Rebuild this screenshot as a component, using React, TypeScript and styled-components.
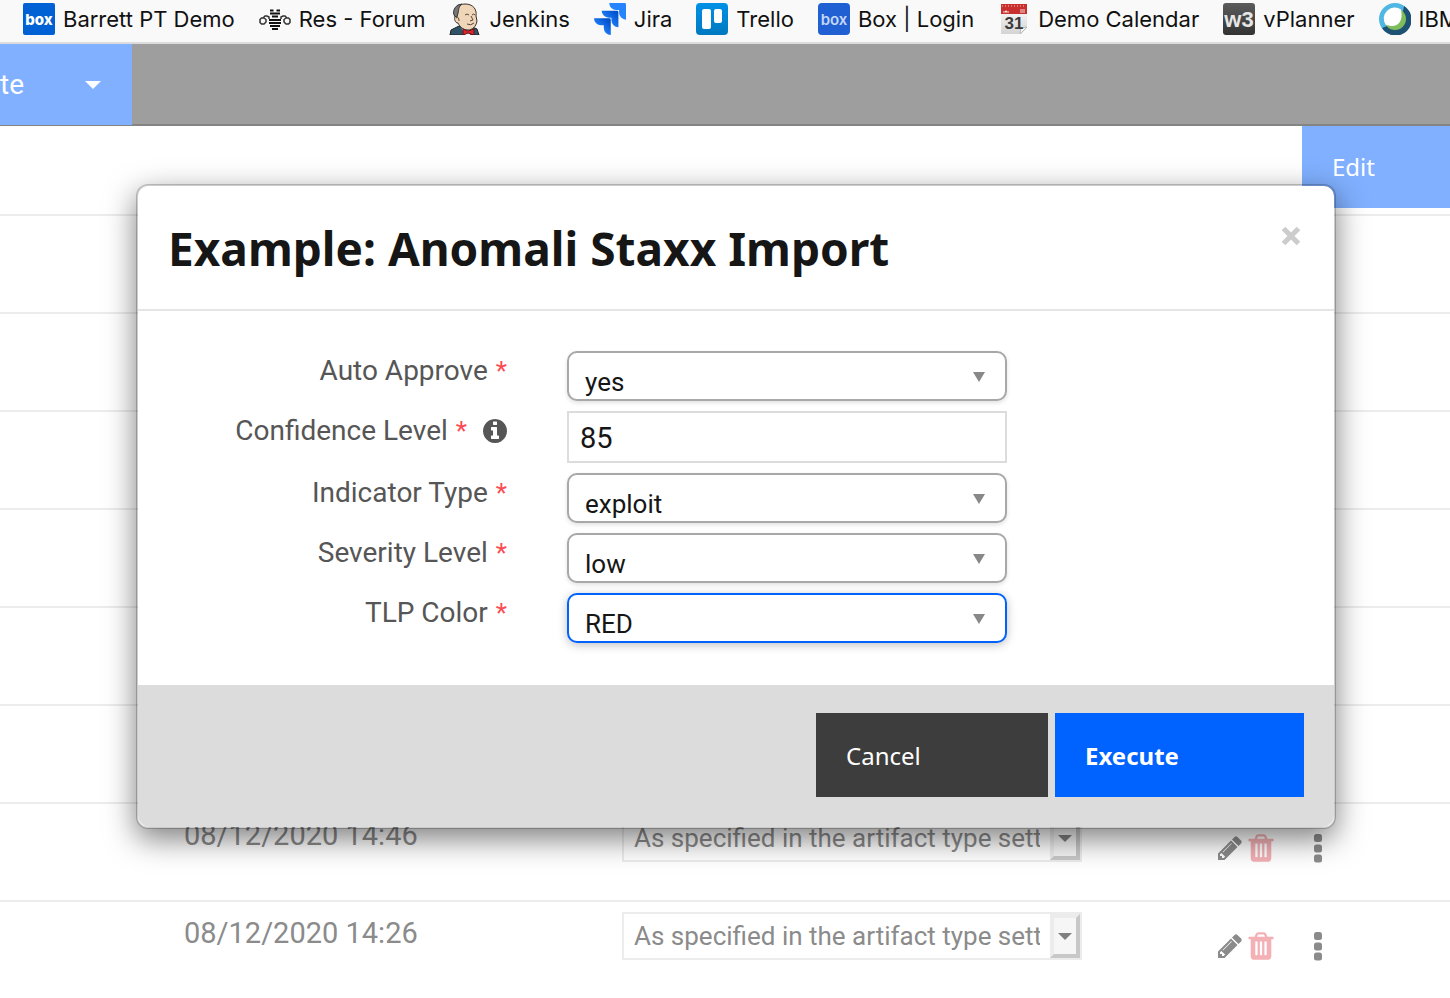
import React from 'react';
import styled, { createGlobalStyle, css } from 'styled-components';

const bodyFont = 'Roboto, "Noto Sans", sans-serif';
const displayFont = '"Noto Sans", "Open Sans", sans-serif';
const systemFont = 'Inter, Roboto, sans-serif';

const GlobalStyle = createGlobalStyle`
  *, *::before, *::after { box-sizing: border-box; }
  html, body { margin: 0; padding: 0; background: #fff; }
  body { overflow: hidden; font-family: ${bodyFont}; color: #161616; }
  button, input, select { font-family: inherit; margin: 0; border-radius: 0; }
  svg { display: block; flex: none; }
`;

const Page = styled.div`
  min-height: 100vh;
  overflow: hidden;
`;

/* Bookmarks bar */

const BookmarkBar = styled.nav`
  display: flex;
  gap: 24px;
  height: 44px;
  padding: 2px 0 0 23px;
  overflow: hidden;
  background: #f9f9f9;
  border-bottom: 2px solid #dcdcdc;
`;

const Bookmark = styled.a`
  display: flex;
  flex: none;
  align-items: center;
  gap: 8px;
  height: 34px;
  font: 400 22px/32px ${systemFont};
  color: #111;
  text-decoration: none;
  white-space: nowrap;
`;

/* Application chrome */

const Toolbar = styled.header`
  display: flex;
  height: 82px;
  background: #9e9e9e;
  border-bottom: 2px solid #848484;
`;

const CreateButton = styled.button`
  display: flex;
  align-items: center;
  justify-content: space-between;
  width: 132px;
  height: 81px;
  padding: 0 31px 0 0;
  border: 0;
  background: #80b0ff;
  color: #fff;
  font-size: 28px;
`;

const PageHeader = styled.div`
  display: flex;
  justify-content: flex-end;
  align-items: flex-start;
  height: 90px;
  border-bottom: 2px solid #ececec;
`;

const EditButton = styled.button`
  width: 148px;
  height: 82px;
  padding: 0 30px;
  border: 0;
  background: #80b0ff;
  color: #fff;
  font: 400 24px/32px ${displayFont};
  text-align: left;
`;

/* Artifact table */

const Table = styled.table`
  width: 100%;
  border-collapse: separate;
  border-spacing: 0;
  table-layout: fixed;
`;

const Row = styled.tr`
  height: 98px;
  &:last-child { height: 96px; }
  &:last-child td { border-bottom: 0; }
`;

const Cell = styled.td`
  padding: 10px 0 0;
  border-bottom: 2px solid #ececec;
  vertical-align: top;
`;

const DateColumn = styled.col`
  width: 622px;
`;

const DateCell = styled(Cell)`
  padding-left: 184px;
  color: #8b8b8b;
  font-size: 29px;
  line-height: 42px;
`;

const ActionCell = styled(Cell)`
  padding: 28px 128px 0 0;
`;

const Actions = styled.div`
  display: flex;
  align-items: center;
  justify-content: flex-end;
  gap: 1px;
`;

const IconButton = styled.button<{ $tone?: string; $spaced?: boolean }>`
  display: flex;
  align-items: center;
  height: 32px;
  padding: 0;
  border: 0;
  background: none;
  color: ${(p) => p.$tone ?? '#8b8b8b'};
  ${(p) => p.$spaced && css`margin-left: 36px;`}
`;

const RelateBox = styled.div`
  position: relative;
  width: 460px;
  height: 48px;
`;

const RelateSelect = styled.select`
  appearance: none;
  width: 100%;
  height: 100%;
  padding: 0 40px 0 10px;
  border: 2px solid #ececec;
  background: #fff;
  color: #8b8b8b;
  font-size: 26px;
`;

const RelateArrow = styled.span`
  position: absolute;
  top: 2px;
  right: 2px;
  display: flex;
  align-items: center;
  justify-content: center;
  width: 30px;
  height: 44px;
  border: 4px solid;
  border-color: #ececec #c8c8c8 #c8c8c8 #ececec;
  background: #f6f6f6;
  color: #808080;
  pointer-events: none;
`;

/* Dialog */

const Overlay = styled.div`
  position: absolute;
  inset: 0;
  padding: 184px 114px 0 136px;
`;

const Dialog = styled.section`
  border: 2px solid rgba(0, 0, 0, 0.2);
  border-radius: 12px;
  background: #fff;
  background-clip: padding-box;
  box-shadow: 0 10px 30px rgba(0, 0, 0, 0.5);
`;

const DialogHeader = styled.header`
  display: flex;
  align-items: flex-start;
  justify-content: space-between;
  padding: 31px 30px 29px;
  border-bottom: 2px solid #e5e5e5;
`;

const DialogTitle = styled.h1`
  margin: 0;
  color: #161616;
  font: 700 46px/63px ${displayFont};
`;

const CloseButton = styled.button`
  display: flex;
  align-items: center;
  justify-content: center;
  width: 26px;
  height: 38px;
  padding: 0;
  border: 0;
  background: none;
  color: #ccc;
`;

const Form = styled.form`
  display: flex;
  flex-direction: column;
  gap: 10px;
  padding: 40px 30px 42px;
`;

const Field = styled.div`
  display: grid;
  grid-template-columns: minmax(0, 339px) minmax(0, 440px);
  column-gap: 60px;
  align-items: start;
`;

const LabelCell = styled.div`
  display: flex;
  align-items: center;
  justify-content: flex-end;
  gap: 16px;
  height: 40px;
  color: #565656;
`;

const Label = styled.label`
  font-size: 28px;
  line-height: 40px;
  white-space: nowrap;
`;

const Required = styled.span`
  margin-left: 8px;
  color: #fb4b53;
  font-size: 26px;
`;

const SelectBox = styled.div`
  position: relative;
`;

const Select = styled.select<{ $active?: boolean }>`
  appearance: none;
  display: block;
  width: 100%;
  height: 50px;
  padding: 12px 48px 0 16px;
  border: 2px solid ${(p) => (p.$active ? '#0062ff' : '#a8a8a8')};
  border-radius: 10px;
  outline: none;
  background: #fff;
  box-shadow: ${(p) => (p.$active ? '0 2px 10px rgba(0, 0, 0, 0.25)' : '0 2px 4px rgba(0, 0, 0, 0.12)')};
  color: #161616;
  font-size: 26px;
`;

const SelectArrow = styled.svg`
  position: absolute;
  top: 21px;
  right: 22px;
  pointer-events: none;
`;

const TextInput = styled.input`
  display: block;
  width: 100%;
  height: 52px;
  padding: 2px 11px 0;
  border: 2px solid #dcdcdc;
  outline: none;
  background: #fff;
  color: #161616;
  font-size: 29px;
`;

const DialogFooter = styled.footer`
  display: flex;
  justify-content: flex-end;
  gap: 7px;
  padding: 28px 30px 30px;
  border-radius: 0 0 12px 12px;
  background: #dcdcdc;
`;

const ActionButton = styled.button<{ $primary?: boolean }>`
  width: ${(p) => (p.$primary ? 249 : 232)}px;
  height: 84px;
  padding: 2px 30px 0;
  border: 0;
  background: ${(p) => (p.$primary ? '#0062ff' : '#3d3d3d')};
  color: #fff;
  font: ${(p) => (p.$primary ? 700 : 400)} 24px/32px ${displayFont};
  text-align: left;
`;

/* Icons */

const BoxLogo = ({ soft }: { soft?: boolean }) => (
  <svg width="32" height="32" viewBox="0 0 32 32" aria-hidden="true">
    <rect width="32" height="32" rx={soft ? 4 : 2} fill={soft ? '#2160d3' : '#0061d5'} />
    <text x="16" y="22" textAnchor="middle" fontFamily="Inter, sans-serif" fontSize="15" fontWeight={soft ? 600 : 800} fill={soft ? '#c5d8f6' : '#fff'}>box</text>
  </svg>
);

const BeeIcon = () => (
  <svg width="32" height="32" viewBox="0 0 32 32" aria-hidden="true" fill="none">
    <path d="M11 7.500h3.500M17.500 7.500H21M11 10.500h10M13 13.500h6M10 17h12M10 20h12M11 23h10M13 26h6" stroke="#111" strokeWidth="2" />
    <path d="M10 16V14L8 13H6L4 15H2.500L1 16.500v3L2.500 21H5l2-2v-2.500L5 15M22 16V14l2-1h2l2 2h1.500L31 16.500v3L29.500 21H27l-2-2v-2.500L27 15" stroke="#333" strokeWidth="1.500" />
  </svg>
);

const JenkinsIcon = () => (
  <svg width="32" height="32" viewBox="0 0 32 32" aria-hidden="true">
    <path d="M1 32l1-5 8-4h11l7 3 2 6z" fill="#2f5468" stroke="#222" strokeWidth="1" />
    <path d="M12 24l4 8h5l3-8z" fill="#eee" />
    <path d="M6 13C5 5 10 1 16 1c8 0 12 5 11 12l1 5c-1 6-5 9-9 9-5 0-8-3-10-7-3 0-4-4-3-7z" fill="#efd6b8" stroke="#3a3028" strokeWidth="1" />
    <path d="M7 14C3 12 4 5 9 2l4-1c-4 3-3 6-4 9l-1 4z" fill="#777" stroke="#333" strokeWidth="1" />
    <path d="M16 12q2-2 4 0M23 12q2-2 3 0M22 13l2 4-3 1M18 21q4 2 7-1M7 15q3-2 3 3" fill="none" stroke="#57483d" strokeWidth="1" />
    <path d="M14 26l5 2 6-2v6l-6-2-5 2z" fill="#d9262c" stroke="#671317" strokeWidth="1" />
  </svg>
);

const JiraIcon = () => (
  <svg width="32" height="32" viewBox="0 0 24 24" aria-hidden="true">
    <defs>
      <linearGradient id="jiraShade" x1="1" y1="0" x2="0.3" y2="0.7">
        <stop offset="0.2" stopColor="#0052cc" />
        <stop offset="1" stopColor="#2684ff" />
      </linearGradient>
    </defs>
    <path fill="#2684ff" d="M23.013 0H11.455a5.215 5.215 0 0 0 5.215 5.215h2.129v2.057A5.215 5.215 0 0 0 24 12.483V1.005A1.001 1.001 0 0 0 23.013 0z" />
    <path fill="url(#jiraShade)" d="M17.294 5.757H5.736a5.215 5.215 0 0 0 5.215 5.214h2.129v2.058a5.218 5.218 0 0 0 5.215 5.214V6.758a1.001 1.001 0 0 0-1.001-1.001z" />
    <path fill="url(#jiraShade)" d="M11.571 11.513H0a5.218 5.218 0 0 0 5.232 5.215h2.130v2.057A5.215 5.215 0 0 0 12.575 24V12.518a1.005 1.005 0 0 0-1.005-1.005z" />
  </svg>
);

const TrelloIcon = () => (
  <svg width="32" height="32" viewBox="0 0 32 32" aria-hidden="true">
    <defs>
      <linearGradient id="trelloShade" x1="0" y1="0" x2="0" y2="1">
        <stop offset="0" stopColor="#0091e6" />
        <stop offset="1" stopColor="#0079bf" />
      </linearGradient>
    </defs>
    <rect width="32" height="32" rx="4" fill="url(#trelloShade)" />
    <rect x="6" y="6" width="9" height="20" rx="2" fill="#fff" />
    <rect x="18" y="6" width="8" height="14" rx="2" fill="#fff" />
  </svg>
);

const CalendarIcon = () => (
  <svg width="32" height="32" viewBox="0 0 32 32" aria-hidden="true">
    <defs>
      <linearGradient id="paper" x1="0" y1="0" x2="0" y2="1">
        <stop offset="0" stopColor="#fff" />
        <stop offset="1" stopColor="#d4d4d4" />
      </linearGradient>
    </defs>
    <path d="M3 1h26v24l-6 6H3z" fill="url(#paper)" />
    <path d="M29 24l-7 7 1-6z" fill="#fafafa" stroke="#bbb" strokeWidth="1" />
    <rect x="3" y="1" width="26" height="10" fill="#c8302f" />
    <path d="M4 3h24" stroke="#f3c6c4" strokeWidth="1" strokeDasharray="1 2" />
    <path d="M5 9h6M22 7h5M22 9h5" stroke="#f6dada" strokeWidth="1" />
    <path d="M7 9l1-2 1 2z" fill="#fff" />
    <text x="16" y="26" textAnchor="middle" fontFamily="Liberation Sans, sans-serif" fontSize="17" fontWeight="700" fill="#3b3b3b">31</text>
  </svg>
);

const W3Icon = () => (
  <svg width="32" height="32" viewBox="0 0 32 32" aria-hidden="true">
    <defs>
      <linearGradient id="w3Shade" x1="0" y1="0" x2="0" y2="1">
        <stop offset="0" stopColor="#5c5c5c" />
        <stop offset="1" stopColor="#333" />
      </linearGradient>
    </defs>
    <rect width="32" height="32" rx="3" fill="url(#w3Shade)" />
    <text x="16" y="24" textAnchor="middle" fontFamily="Liberation Sans, sans-serif" fontSize="22" fontWeight="700" fill="#e6e6e6">w3</text>
  </svg>
);

const WebexIcon = () => (
  <svg width="32" height="32" viewBox="0 0 32 32" aria-hidden="true">
    <circle cx="16" cy="16" r="16" fill="#50b6e4" />
    <path d="M25 3A16 16 0 1 1 3 25l5-2L24 8z" fill="#1e5274" />
    <circle cx="16" cy="16" r="11" fill="#7fbc5b" />
    <path d="M22 6.500C25 20 17 26 6.500 21.500A11 11 0 0 1 22 6.500z" fill="#fff" />
  </svg>
);

const InfoIcon = () => (
  <svg width="24" height="24" viewBox="128 128 1536 1536" fill="currentColor" aria-hidden="true">
    <path d="M1152 1376v-160q0-14-9-23t-23-9h-96v-512q0-14-9-23t-23-9h-320q-14 0-23 9t-9 23v160q0 14 9 23t23 9h96v320h-96q-14 0-23 9t-9 23v160q0 14 9 23t23 9h448q14 0 23-9t9-23zm-128-896v-160q0-14-9-23t-23-9h-192q-14 0-23 9t-9 23v160q0 14 9 23t23 9h192q14 0 23-9t9-23zm640 416q0 209-103 385.500t-279.500 279.500-385.500 103-385.500-103-279.500-279.500-103-385.500 103-385.500 279.500-279.500 385.500-103 385.500 103 279.500 279.500 103 385.500z" />
  </svg>
);

const PencilIcon = () => (
  <svg width="28" height="28" viewBox="0 0 1792 1792" fill="currentColor" aria-hidden="true">
    <path d="M491 1536l91-91-235-235-91 91v107h128v128h107zm523-928q0-22-22-22-10 0-17 7l-542 542q-7 7-7 17 0 22 22 22 10 0 17-7l542-542q7-7 7-17zm-54-192l416 416-832 832h-416v-416zm683 96q0 53-37 90l-166 166-416-416 166-165q36-38 90-38 53 0 91 38l235 234q37 39 37 91z" />
  </svg>
);

const TrashIcon = () => (
  <svg width="32" height="32" viewBox="0 0 1792 1792" fill="currentColor" aria-hidden="true">
    <path d="M704 1376v-704q0-14-9-23t-23-9h-64q-14 0-23 9t-9 23v704q0 14 9 23t23 9h64q14 0 23-9t9-23zm256 0v-704q0-14-9-23t-23-9h-64q-14 0-23 9t-9 23v704q0 14 9 23t23 9h64q14 0 23-9t9-23zm256 0v-704q0-14-9-23t-23-9h-64q-14 0-23 9t-9 23v704q0 14 9 23t23 9h64q14 0 23-9t9-23zm-544-992h448l-48-117q-7-9-17-11h-317q-10 2-17 11zm928 32v64q0 14-9 23t-23 9h-96v948q0 83-47 143.500t-113 60.500h-832q-66 0-113-58.500t-47-141.500v-952h-96q-14 0-23-9t-9-23v-64q0-14 9-23t23-9h309l70-167q15-37 54-63t79-26h320q40 0 79 26t54 63l70 167h309q14 0 23 9t9 23z" />
  </svg>
);

const DotsIcon = () => (
  <svg width="8" height="30" viewBox="0 0 8 30" fill="currentColor" aria-hidden="true">
    <rect y="1" width="8" height="8" rx="2.500" />
    <rect y="11.500" width="8" height="8" rx="2.500" />
    <rect y="21.500" width="8" height="8" rx="2.500" />
  </svg>
);

const CaretIcon = ({ width, height }: { width: number; height: number }) => (
  <svg width={width} height={height} viewBox="0 0 16 8" preserveAspectRatio="none" fill="currentColor" aria-hidden="true">
    <path d="M0 0h16L8 8z" />
  </svg>
);

const CloseIcon = () => (
  <svg width="20" height="20" viewBox="0 0 20 20" aria-hidden="true">
    <path d="M2.500 2.500l15 15M17.500 2.500l-15 15" stroke="currentColor" strokeWidth="5" />
  </svg>
);

/* Content */

const bookmarks = [
  { label: 'Barrett PT Demo', icon: <BoxLogo /> },
  { label: 'Res - Forum', icon: <BeeIcon /> },
  { label: 'Jenkins', icon: <JenkinsIcon /> },
  { label: 'Jira', icon: <JiraIcon /> },
  { label: 'Trello', icon: <TrelloIcon /> },
  { label: 'Box | Login', icon: <BoxLogo soft /> },
  { label: 'Demo Calendar', icon: <CalendarIcon /> },
  { label: 'vPlanner', icon: <W3Icon /> },
  { label: 'IBM', icon: <WebexIcon /> },
];

const rows = ['', '', '', '', '', '', '08/12/2020 14:46', '08/12/2020 14:26'];

type FieldData = { id: string; label: string; value: string; text?: boolean; active?: boolean };

const fields: FieldData[] = [
  { id: 'auto-approve', label: 'Auto Approve', value: 'yes' },
  { id: 'confidence', label: 'Confidence Level', value: '85', text: true },
  { id: 'indicator', label: 'Indicator Type', value: 'exploit' },
  { id: 'severity', label: 'Severity Level', value: 'low' },
  { id: 'tlp', label: 'TLP Color', value: 'RED', active: true },
];

const ArtifactRow = ({ date }: { date: string }) => (
  <Row>
    <DateCell>{date}</DateCell>
    <Cell>
      {date && (
        <RelateBox>
          <RelateSelect aria-label="Relate">
            <option>As specified in the artifact type settings</option>
          </RelateSelect>
          <RelateArrow>
            <CaretIcon width={14} height={7} />
          </RelateArrow>
        </RelateBox>
      )}
    </Cell>
    <ActionCell>
      {date && (
        <Actions>
          <IconButton aria-label="Edit artifact"><PencilIcon /></IconButton>
          <IconButton aria-label="Delete artifact" $tone="#f3b0b5"><TrashIcon /></IconButton>
          <IconButton aria-label="More actions" $spaced><DotsIcon /></IconButton>
        </Actions>
      )}
    </ActionCell>
  </Row>
);

const FormField = ({ id, label, value, text, active }: FieldData) => (
  <Field>
    <LabelCell>
      <Label htmlFor={id}>
        {label}
        <Required>*</Required>
      </Label>
      {text && <InfoIcon />}
    </LabelCell>
    {text ? (
      <TextInput id={id} defaultValue={value} />
    ) : (
      <SelectBox>
        <Select id={id} $active={active} defaultValue={value}>
          <option>{value}</option>
        </Select>
        <SelectArrow width="12" height="10" viewBox="0 0 12 10" aria-hidden="true">
          <path d="M0 0h12L6 10z" fill="#888" />
        </SelectArrow>
      </SelectBox>
    )}
  </Field>
);

export default function App() {
  return (
    <Page>
      <GlobalStyle />
      <BookmarkBar>
        {bookmarks.map(({ label, icon }) => (
          <Bookmark key={label} href="#">
            {icon}
            {label}
          </Bookmark>
        ))}
      </BookmarkBar>
      <Toolbar>
        <CreateButton>
          te
          <CaretIcon width={16} height={8} />
        </CreateButton>
      </Toolbar>
      <main>
        <PageHeader>
          <EditButton>Edit</EditButton>
        </PageHeader>
        <Table>
          <colgroup>
            <DateColumn />
            <col />
            <col />
          </colgroup>
          <tbody>
            {rows.map((date, i) => (
              <ArtifactRow key={i} date={date} />
            ))}
          </tbody>
        </Table>
      </main>
      <Overlay>
        <Dialog role="dialog" aria-modal="true" aria-labelledby="dialog-title">
          <DialogHeader>
            <DialogTitle id="dialog-title">Example: Anomali Staxx Import</DialogTitle>
            <CloseButton aria-label="Close"><CloseIcon /></CloseButton>
          </DialogHeader>
          <Form id="import-form">
            {fields.map((field) => (
              <FormField key={field.id} {...field} />
            ))}
          </Form>
          <DialogFooter>
            <ActionButton type="button">Cancel</ActionButton>
            <ActionButton type="submit" form="import-form" $primary>Execute</ActionButton>
          </DialogFooter>
        </Dialog>
      </Overlay>
    </Page>
  );
}
